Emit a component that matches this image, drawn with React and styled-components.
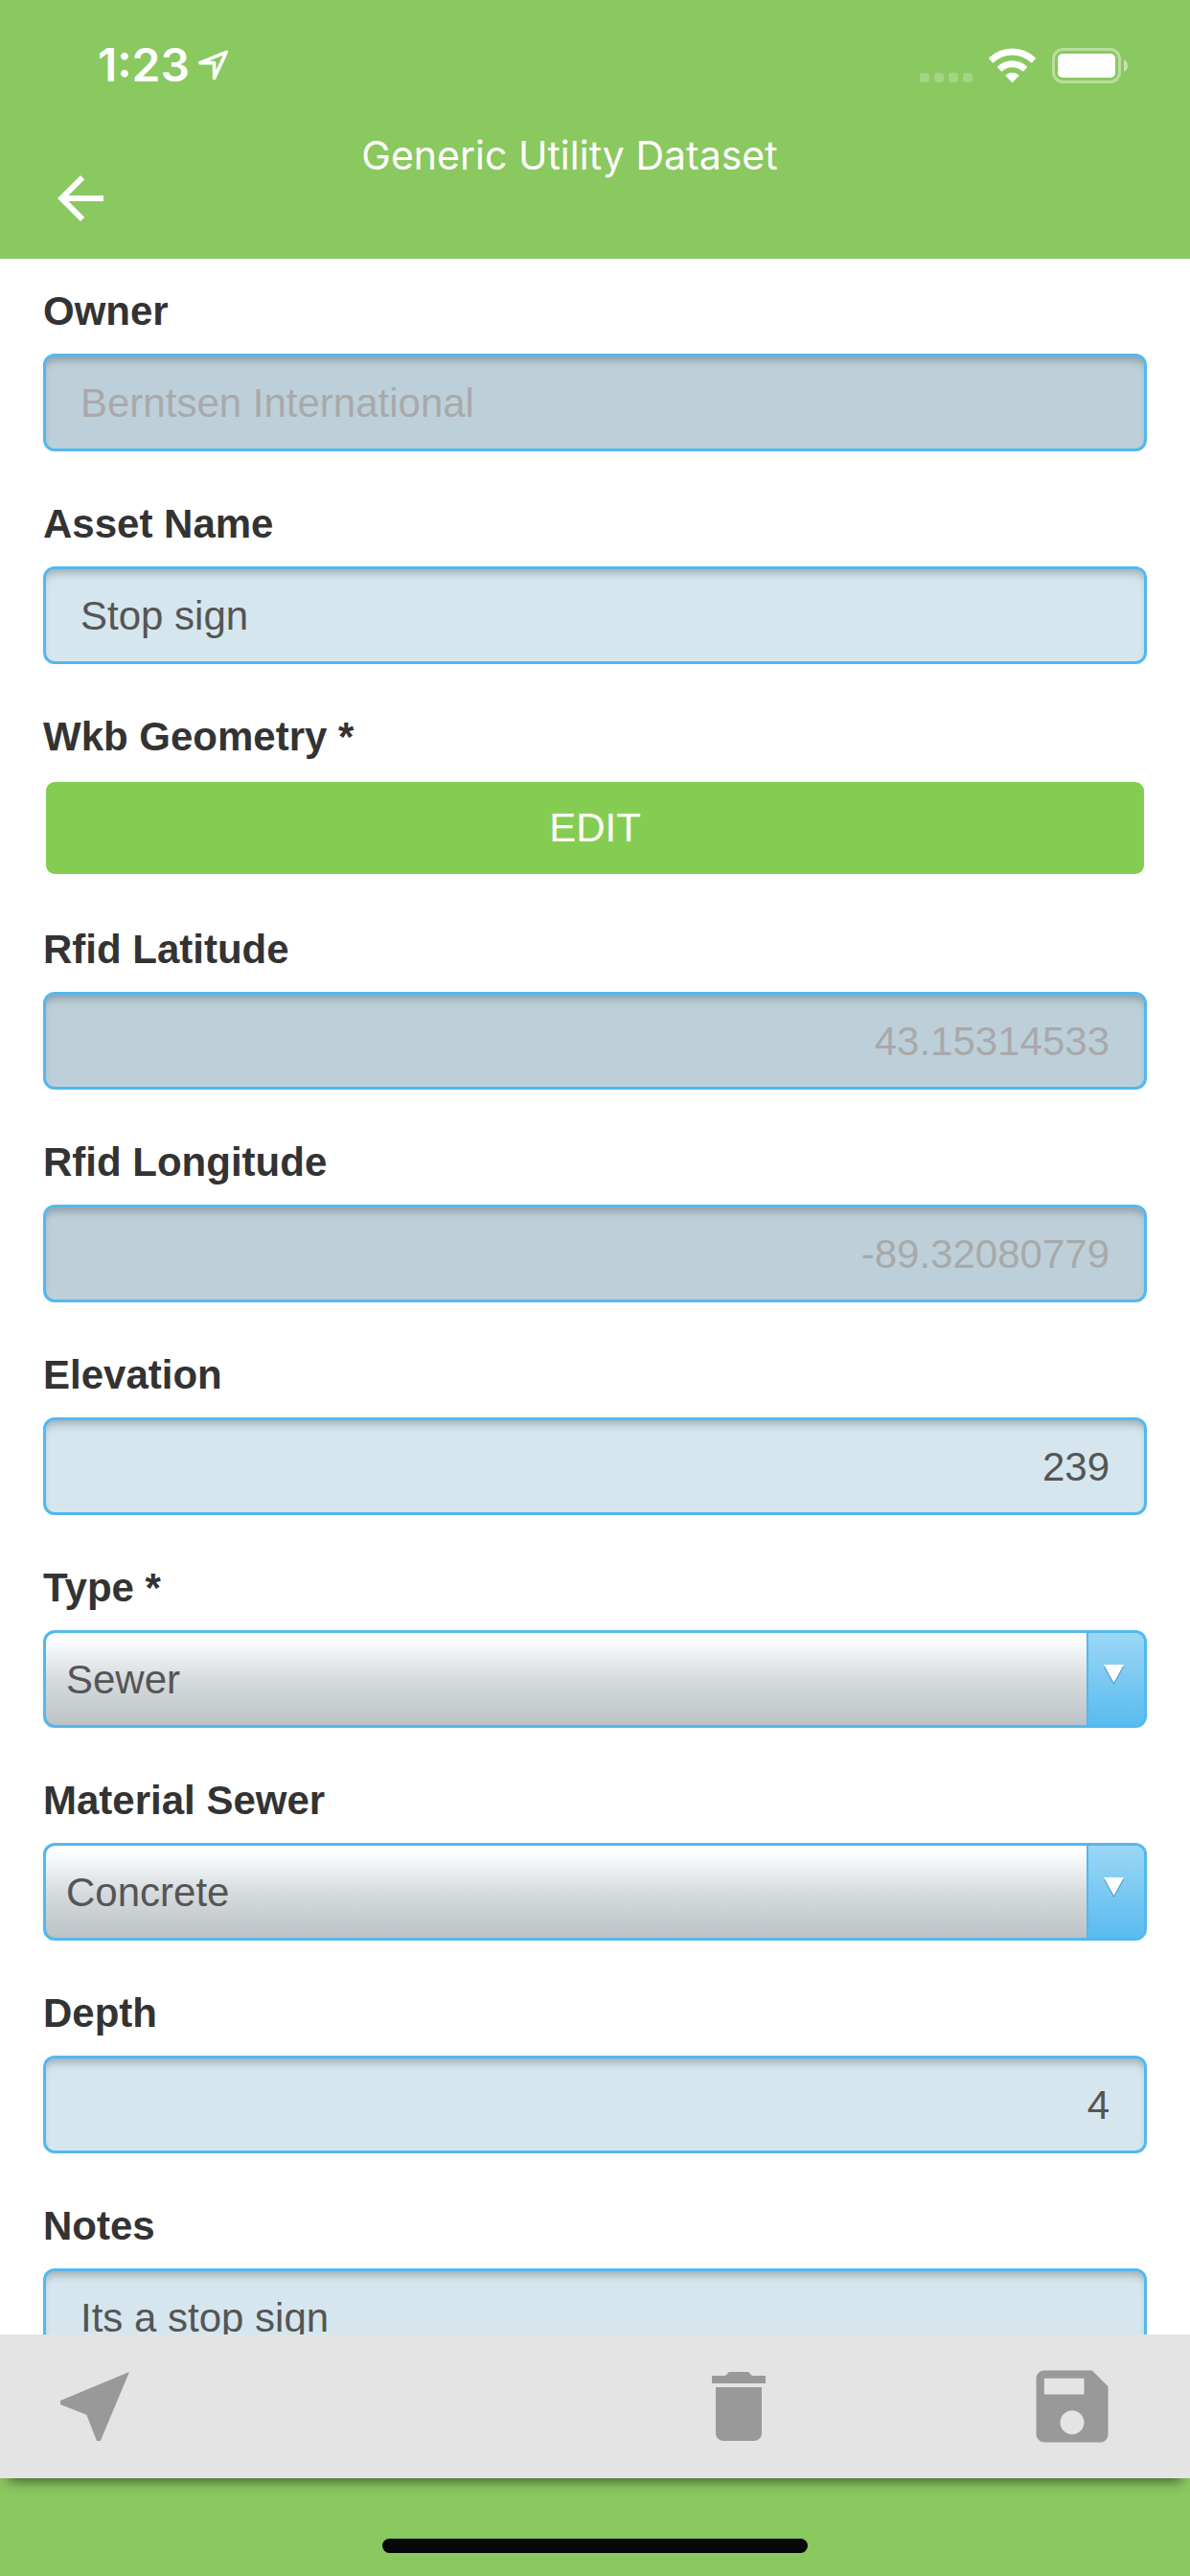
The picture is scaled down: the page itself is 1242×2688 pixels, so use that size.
import React from 'react';
import styled, { createGlobalStyle } from 'styled-components';
import { MdArrowBack, MdDelete, MdNearMe, MdSave } from 'react-icons/md';


const fields = [
    { id: 'owner', label: 'Owner', kind: 'text', value: 'Berntsen International', disabled: true },
    { id: 'assetName', label: 'Asset Name', kind: 'text', value: 'Stop sign' },
    { id: 'geometry', label: 'Wkb Geometry *', kind: 'button', value: 'EDIT' },
    { id: 'latitude', label: 'Rfid Latitude', kind: 'number', value: '43.15314533', disabled: true },
    { id: 'longitude', label: 'Rfid Longitude', kind: 'number', value: '-89.32080779', disabled: true },
    { id: 'elevation', label: 'Elevation', kind: 'number', value: '239' },
    { id: 'type', label: 'Type *', kind: 'select', value: 'Sewer', options: ['Sewer', 'Water', 'Gas', 'Electric'] },
    { id: 'material', label: 'Material Sewer', kind: 'select', value: 'Concrete', options: ['Concrete', 'Clay', 'PVC'] },
    { id: 'depth', label: 'Depth', kind: 'number', value: '4' },
    { id: 'notes', label: 'Notes', kind: 'text', value: 'Its a stop sign' },
];

const StatusBar = () => {
    return (
        <StatusRow>
            <Clock>1:23</Clock>
            <svg width="34" height="34" viewBox="0 0 34 34" aria-hidden="true">
                <path d="M30.3 3.3 2.6 14.6H17.6V30.6Z" fill="none" stroke="#fff" strokeWidth="3.6" strokeLinejoin="round" />
            </svg>
            <StatusIcons>
                <svg width="55" height="37" viewBox="0 0 55 37" aria-hidden="true">
                    {[0, 15, 30, 45].map(x =>
                        <rect key={x} x={x} y="26" width="10" height="10" rx="3" fill="#fff" fillOpacity="0.22" />
                    )}
                </svg>
                <svg width="49" height="37" viewBox="0 0 49 37" aria-hidden="true">
                    <g fill="#fff">
                        <path d="M0.3 10.3A34.5 34.5 0 0 1 48.7 10.3Q49.3 11 48.7 11.6L45.2 15.2Q44.6 15.8 43.9 15.2A28 28 0 0 0 5.1 15.2Q4.4 15.8 3.8 15.2L0.3 11.6Q-0.3 11 0.3 10.3Z" />
                        <path d="M9.2 19.3A22.3 22.3 0 0 1 39.8 19.3Q40.4 20 39.8 20.6L36.2 24.3Q35.6 24.9 34.9 24.3A15.6 15.6 0 0 0 14.1 24.3Q13.4 24.9 12.8 24.3L9.2 20.6Q8.6 20 9.2 19.3Z" />
                        <path d="M17.9 28.2A10 10 0 0 1 31.1 28.2Q31.8 28.9 31.1 29.6L25.1 35.7Q24.5 36.3 23.9 35.7L17.9 29.6Q17.2 28.9 17.9 28.2Z" />
                    </g>
                </svg>
                <svg width="79" height="37" viewBox="0 0 79 37" aria-hidden="true">
                    <rect x="1.5" y="1.5" width="69" height="34" rx="10" fill="none" stroke="#fff" strokeOpacity="0.4" strokeWidth="3" />
                    <rect x="6" y="6" width="60" height="25" rx="5" fill="#fff" />
                    <path d="M75 12C80.300 14.500 80.300 22.500 75 25Z" fill="#fff" fillOpacity="0.5" />
                </svg>
            </StatusIcons>
        </StatusRow>
    );
};

const Control = ({ field }) => {
    if (field.kind === 'button') {
        return <EditButton id={field.id} type="button">{field.value}</EditButton>;
    }
    if (field.kind === 'select') {
        return (
            <SelectBox>
                <select id={field.id} defaultValue={field.value}>
                    {field.options.map(option => <option key={option}>{option}</option>)}
                </select>
                <SelectArrow>
                    <svg width="21" height="21" viewBox="0 0 21 21" aria-hidden="true">
                        <path d="M0 2H21L10.5 21Z" fill="#4c93bb" />
                        <path d="M0 0H21L10.5 19Z" fill="#fff" />
                    </svg>
                </SelectArrow>
            </SelectBox>
        );
    }
    return (
        <TextInput
            id={field.id}
            type="text"
            inputMode={field.kind === 'number' ? 'decimal' : 'text'}
            defaultValue={field.value}
            disabled={field.disabled}
            $align={field.kind === 'number' ? 'right' : 'left'}
        />
    );
};

const App = () => {
    return (
        <>
            <GlobalStyle />
            <Screen>
                <Header>
                    <StatusBar />
                    <NavRow>
                        <BackButton type="button" aria-label="Back"><MdArrowBack size={72} /></BackButton>
                        <h1>Generic Utility Dataset</h1>
                    </NavRow>
                </Header>
                <Form>
                    {fields.map(field =>
                        <Field key={field.id}>
                            <label htmlFor={field.id}>{field.label}</label>
                            <Control field={field} />
                        </Field>
                    )}
                </Form>
                <Toolbar>
                    <ToolButton type="button" aria-label="Locate" $first><MdNearMe size={96} /></ToolButton>
                    <ToolButton type="button" aria-label="Delete"><MdDelete size={96} /></ToolButton>
                    <ToolButton type="button" aria-label="Save"><MdSave size={100} /></ToolButton>
                </Toolbar>
                <Footer><HomeIndicator /></Footer>
            </Screen>
        </>
    );
};

export default App;

const GlobalStyle = createGlobalStyle`
    * {
        box-sizing: border-box;
    }
    body {
        margin: 0;
        background-color: #fff;
        font-family: "Liberation Sans", Arial, sans-serif;
    }
    button, input, select {
        font: inherit;
    }
`

const Screen = styled.div`
    display: flex;
    flex-direction: column;
    height: 100vh;
`

const Header = styled.header`
    flex: none;
    background-color: #8ac860;
    color: #fff;
    font-family: Inter, sans-serif;
`

const StatusRow = styled.div`
    display: flex;
    align-items: center;
    padding: 44px 65px 46px 102px;
`

const Clock = styled.span`
    margin-right: 8px;
    font-size: 48px;
    font-weight: 600;
    line-height: 48px;
`

const StatusIcons = styled.div`
    display: flex;
    gap: 17px;
    margin-left: auto;
`

const NavRow = styled.div`
    display: flex;
    align-items: flex-start;
    padding: 0 173px 27px 48px;
    h1 {
        flex: 1;
        margin: 0;
        font-size: 41px;
        font-weight: 400;
        line-height: 48px;
        text-align: center;
    }
`

const BackButton = styled.button`
    display: flex;
    margin-top: 33px;
    padding: 0;
    border: 0;
    background: none;
    color: #fff;
`

const Form = styled.form`
    flex: 1;
    min-height: 0;
    overflow-y: auto;
    scrollbar-width: none;
    padding: 31px 45px;
    font-size: 42px;
`

const Field = styled.div`
    display: flex;
    flex-direction: column;
    margin-bottom: 52px;
    label {
        margin-bottom: 20px;
        color: #333;
        font-weight: 700;
        line-height: 48px;
    }
`

const TextInput = styled.input`
    width: 100%;
    height: 102px;
    padding: 2px 36px 0;
    border: 3px solid #53b8ee;
    border-radius: 12px;
    background-color: #d5e6ee;
    box-shadow: inset 0 8px 8px -4px rgba(0, 0, 0, 0.25);
    color: #555;
    text-align: ${props => props.$align};
    &:disabled {
        background-color: #bdd0da;
        color: #a9a9a9;
    }
`

const EditButton = styled.button`
    height: 96px;
    margin: 3px;
    padding: 0;
    border: 0;
    border-radius: 9px;
    background-color: #85cd52;
    color: #fff;
`

const SelectBox = styled.div`
    position: relative;
    height: 102px;
    border: 3px solid #53b8ee;
    border-radius: 12px;
    background-color: #53b8ee;
    overflow: hidden;
    select {
        appearance: none;
        width: 100%;
        height: 100%;
        padding: 0 81px 0 21px;
        border: 0;
        border-radius: 9px;
        background: linear-gradient(#fff 5%, #eef2f5 22%, #d5dadd 52%, #bdc2c6);
        color: #555;
    }
`

const SelectArrow = styled.span`
    position: absolute;
    top: 0;
    right: 0;
    bottom: 0;
    display: flex;
    justify-content: center;
    width: 60px;
    padding-top: 33px;
    border-left: 2px solid #53b8ee;
    border-radius: 0 9px 9px 0;
    background: linear-gradient(#9bd7f6, #5abbef);
    pointer-events: none;
    svg {
        margin-right: 5px;
    }
`

const Toolbar = styled.div`
    position: relative;
    flex: none;
    display: flex;
    align-items: center;
    gap: 250px;
    height: 150px;
    padding: 0 73px 0 51px;
    background-color: #e4e4e4;
    box-shadow: 0 12px 12px -9px rgba(0, 0, 0, 0.55);
`

const ToolButton = styled.button`
    display: flex;
    margin-right: ${props => props.$first ? 'auto' : '0'};
    padding: 0;
    border: 0;
    background: none;
    color: #999;
`

const Footer = styled.footer`
    flex: none;
    display: flex;
    justify-content: center;
    align-items: flex-end;
    height: 102px;
    padding-bottom: 24px;
    background-color: #8ac860;
`

const HomeIndicator = styled.div`
    width: 444px;
    height: 15px;
    border-radius: 8px;
    background-color: #080808;
`
